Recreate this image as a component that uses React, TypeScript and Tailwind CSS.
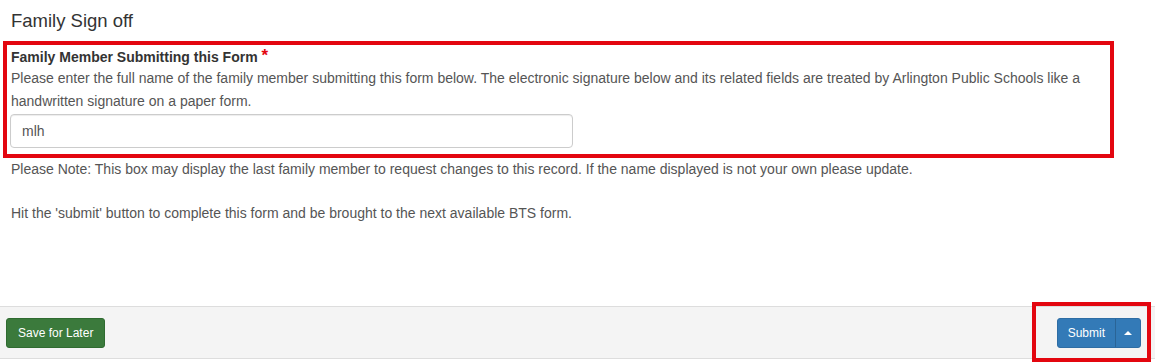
import React, { useState } from 'react';

export default function App() {
  const [signer, setSigner] = useState('mlh');

  return (
    <div
      className="relative flex h-[364px] w-full flex-col overflow-hidden bg-white text-[#333]"
      style={{ fontFamily: '"Liberation Sans", Arial, sans-serif' }}
    >
      {/* Form body */}
      <div className="flex-1">
        <h3 className="pl-[11px] text-[18.5px] leading-[41px] text-[#333]">Family Sign off</h3>

        {/* Highlighted field group */}
        <div className="ml-[3px] w-[1111px] border-[4px] border-[#e3060f] pl-[4px] pt-[2px] pb-[6px]">
          <label className="block text-[14px] font-bold leading-[20px] text-[#333]">
            Family Member Submitting this Form{' '}
            <span className="relative -top-[1px] text-[17px] leading-none text-[#e3060f]">*</span>
          </label>
          <p className="text-[14px] leading-[22.5px] text-[#555]">
            Please enter the full name of the family member submitting this form below. The electronic signature below and its
            related fields are treated by Arlington Public Schools like a handwritten signature on a paper form.
          </p>
          <input
            value={signer}
            onChange={(e) => setSigner(e.target.value)}
            className="-ml-[1px] mt-[2px] h-[34px] w-[563px] rounded-[4px] border border-[#ccc] px-[11px] text-[14px] text-[#555] shadow-[inset_0_1px_1px_rgba(0,0,0,0.075)] outline-none"
          />
        </div>

        <div className="pl-[11px] text-[14px] leading-[22px] text-[#555]">
          <p>
            Please Note: This box may display the last family member to request changes to this record. If the name displayed is
            not your own please update.
          </p>
          <p className="mt-[22px]">Hit the 'submit' button to complete this form and be brought to the next available BTS form.</p>
        </div>
      </div>

      {/* Footer actions */}
      <div className="mb-[5px] flex items-center justify-between border-y border-[#ddd] bg-[#f4f4f4] pl-[6px] pr-[14px] pt-[11px] pb-[10px]">
        <button className="h-[30px] rounded-[3px] border border-[#2f6b30] bg-[#3b7a3c] px-[11px] text-[12px] text-white">
          Save for Later
        </button>
        <div className="flex h-[30px] overflow-hidden rounded-[3px] border border-[#2e6da4] bg-[#337ab7] text-white">
          <button className="px-[10px] text-[12px]">Submit</button>
          <button className="flex w-[25px] items-center justify-center border-l border-[#2a6496]">
            <span className="block h-0 w-0 border-x-[4px] border-b-[4px] border-x-transparent border-b-white" />
          </button>
        </div>
      </div>

      {/* Annotation around Submit */}
      <div className="pointer-events-none absolute left-[1032px] top-[302px] h-[60px] w-[119px] border-[4px] border-[#e3060f]" />
    </div>
  );
}
